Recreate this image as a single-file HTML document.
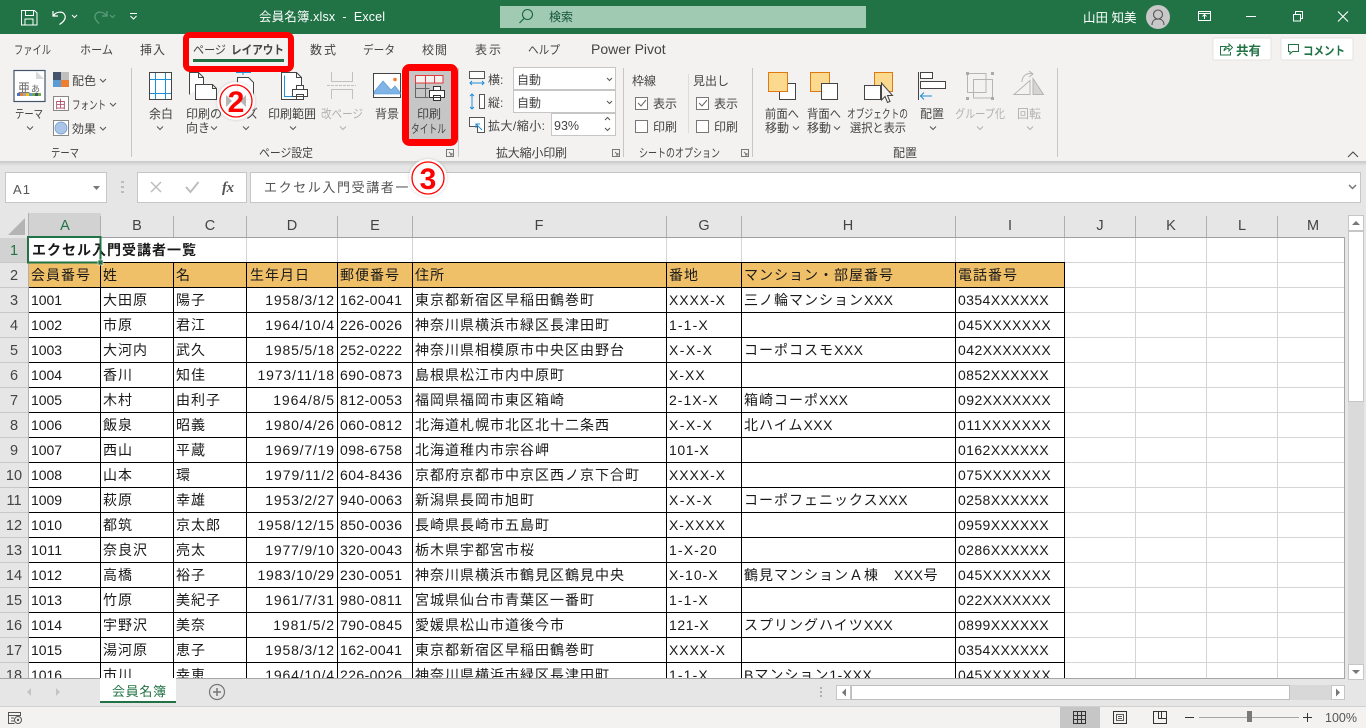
<!DOCTYPE html>
<html lang="ja"><head><meta charset="utf-8"><title>会員名簿.xlsx - Excel</title>
<style>
html,body{margin:0;padding:0;background:#e6e6e6;width:1366px;height:728px;overflow:hidden}
svg{display:block}
text{font-family:"Liberation Sans","Noto Sans CJK JP",sans-serif;white-space:pre}
.r{font-size:12px;fill:#444}
.d{font-size:12px;fill:#b1b1b1}
.t{font-size:12px;fill:#444}
.w{font-size:12px;fill:#fff}
.c{font-size:14px;letter-spacing:1px;fill:#1a1a1a}
.n{font-size:14px;letter-spacing:0;fill:#1a1a1a}
.x{letter-spacing:.5px}
.h{font-size:14.5px;fill:#444;text-anchor:middle}
.e{text-anchor:end}
.ch{fill:none;stroke:#555;stroke-width:1}
.chd{fill:none;stroke:#b1b1b1;stroke-width:1}
.i{fill:none;stroke:#444;stroke-width:1}
.b{fill:none;stroke:#1f8fd6;stroke-width:1}
.g{fill:#d4d4d4}
.k{fill:#000}
</style></head><body>
<svg xmlns="http://www.w3.org/2000/svg" width="1366" height="728" viewBox="0 0 1366 728">
<defs>
<clipPath id="gc"><rect x="0" y="213" width="1345" height="465"/></clipPath>
<linearGradient id="sh" x1="0" y1="0" x2="0" y2="1"><stop offset="0" stop-color="#c8c8c8"/><stop offset="1" stop-color="#e6e6e6"/></linearGradient>
<filter id="bl" x="-30%" y="-30%" width="160%" height="160%"><feGaussianBlur stdDeviation="1.2"/></filter>
</defs>
<rect width="1366" height="728" fill="#e6e6e6"/>

<!-- title bar -->
<rect width="1366" height="34" fill="#217346"/>
<path d="M21.5 10.5h13l2.500 2.500v12h-15.500z M25.500 10.500v5h8v-5 M25 25v-6h8v6" fill="none" stroke="#fff"/>
<path d="M53 11v5h5 M53.500 15.500c3-4 9-4.500 11-1 2 3.500-.5 7-5 10" fill="none" stroke="#fff" stroke-width="1.200"/>
<path d="M72 15l2.500 2.500 2.500-2.500" fill="none" stroke="#fff"/>
<path d="M107 11v5h-5 M106.500 15.500c-3-4-9-4.500-11-1-1.500 2.500 0 6 3.500 9" fill="none" stroke="#5f9e7c" stroke-width="1.200"/>
<path d="M110 15l2.500 2.500 2.500-2.500" fill="none" stroke="#5f9e7c"/>
<path d="M130 13.500h7M130.500 16l3 3 3-3" fill="none" stroke="#fff"/>
<text x="259" y="21" class="w" style="font-size:12.500px" textLength="126">会員名簿.xlsx  -  Excel</text>
<rect x="500" y="6" width="366" height="22" fill="#a0cbb2"/>
<circle cx="527.500" cy="14.500" r="5" fill="none" stroke="#17663c" stroke-width="1.100"/>
<path d="M524 18.500l-4.500 4.500" stroke="#17663c" stroke-width="1.200"/>
<text x="549" y="21" style="font-size:12px;fill:#17543a">検索</text>
<text x="1083" y="22" class="w" style="font-size:12.500px">山田 知美</text>
<circle cx="1158" cy="17" r="12" fill="#c8c8c8"/>
<circle cx="1158" cy="14.500" r="4.500" fill="none" stroke="#555" stroke-width="1.100"/>
<path d="M1152 25c0-4 2.500-6 6-6s6 2 6 6" fill="none" stroke="#555" stroke-width="1.100"/>
<path d="M1198.500 11.500h12v9h-12zM1198.500 13.500h12M1204.500 19v-4M1202.500 16.500l2-2 2 2" fill="none" stroke="#fff"/>
<rect x="1246" y="16" width="10" height="1" fill="#fff"/>
<path d="M1293.500 14.500h7v6.500h-7zM1295.500 14v-2.500h7v7h-2" fill="none" stroke="#fff"/>
<path d="M1338 11.500l10 10M1348 11.500l-10 10" stroke="#fff" stroke-width="1.100"/>

<!-- ribbon -->
<rect y="34" width="1366" height="127" fill="#f3f2f1"/>
<rect y="161" width="1366" height="5" fill="url(#sh)"/>
<text x="14" y="54" class="t" textLength="37" lengthAdjust="spacingAndGlyphs">ファイル</text>
<text x="80" y="54" class="t" textLength="33" lengthAdjust="spacingAndGlyphs">ホーム</text>
<text x="140" y="54" class="t" textLength="25">挿入</text>
<text x="193" y="54" class="t" textLength="33" lengthAdjust="spacingAndGlyphs">ページ</text>
<text x="231" y="54" class="t" style="font-weight:700" textLength="53" lengthAdjust="spacingAndGlyphs">レイアウト</text>
<text x="310" y="54" class="t" textLength="26">数式</text>
<text x="363" y="54" class="t" textLength="32" lengthAdjust="spacingAndGlyphs">データ</text>
<text x="422" y="54" class="t" textLength="25">校閲</text>
<text x="475" y="54" class="t" textLength="26">表示</text>
<text x="528" y="54" class="t" textLength="32" lengthAdjust="spacingAndGlyphs">ヘルプ</text>
<text x="591" y="54" class="t" style="font-size:14px">Power Pivot</text>
<rect x="193" y="59" width="91" height="3" fill="#217346"/>
<rect x="186" y="35" width="105" height="34" rx="4" fill="none" stroke="#f00" stroke-width="6"/>

<rect x="1213" y="38" width="58" height="22" rx="1" fill="#fff" stroke="#e4e2e0"/>
<path d="M1226.500 46.500h-6v8.500h10v-3M1224 51c0-3 2.500-4.500 5-4.500v-2.500l3.500 3.500-3.500 3.500v-2.500c-2 0-4 .5-5 2.500z" fill="none" stroke="#217346"/>
<text x="1236" y="55" style="font-size:12.500px;font-weight:700;fill:#217346">共有</text>
<rect x="1281" y="38" width="72" height="22" rx="1" fill="#fff" stroke="#e4e2e0"/>
<path d="M1288.500 44.500h10v7h-6l-2.500 2.500v-2.500h-1.500z" fill="none" stroke="#217346"/>
<text x="1303" y="55" style="font-size:12px;font-weight:700;fill:#217346" textLength="42" lengthAdjust="spacingAndGlyphs">コメント</text>

<!-- theme -->
<rect x="14" y="70.500" width="31" height="31" fill="#fff" stroke="#44546a" stroke-width="1.200"/>
<path d="M36 71l8 8h-8z" fill="#d9d9d9"/>
<text x="18" y="92" style="font-size:12px;fill:#666">亜</text><text x="31" y="92" style="font-size:9px;fill:#666">あ</text>
<rect x="17" y="93" width="3" height="3" fill="#4472c4"/><rect x="20" y="93" width="3" height="3" fill="#ed7d31"/><rect x="23" y="93" width="3" height="3" fill="#a5a5a5"/><rect x="26" y="93" width="3" height="3" fill="#ffc000"/><rect x="29" y="93" width="3" height="3" fill="#5b9bd5"/><rect x="32" y="93" width="3" height="3" fill="#70ad47"/><rect x="35" y="93" width="3" height="3" fill="#44546a"/><rect x="38" y="93" width="3" height="3" fill="#70ad47"/>
<text x="15" y="118" class="r" textLength="28" lengthAdjust="spacingAndGlyphs">テーマ</text>
<path class="ch" d="M27 126.500l3 3 3-3"/>
<rect x="53" y="72" width="8" height="8" fill="#44546a"/><rect x="61" y="72" width="8" height="8" fill="#bfbfbf"/><rect x="53" y="80" width="8" height="7" fill="#5b9bd5"/><rect x="61" y="80" width="8" height="7" fill="#ed7d31"/>
<text x="72" y="85" class="r">配色</text><path class="ch" d="M100 79l3 3 3-3"/>
<rect x="53.500" y="96.500" width="15" height="14" fill="#fff" stroke="#888"/>
<text x="55" y="108" style="font-size:11px;fill:#a46">由</text>
<text x="72" y="109" class="r" textLength="34" lengthAdjust="spacingAndGlyphs">フォント</text><path class="ch" d="M110 103l3 3 3-3"/>
<rect x="53.500" y="120.500" width="15" height="15" fill="#fff" stroke="#888"/>
<circle cx="61" cy="128" r="6" fill="#a9c6e8" stroke="#6a95c5" stroke-width=".7"/>
<text x="72" y="133" class="r">効果</text><path class="ch" d="M100 127l3 3 3-3"/>
<text x="51" y="157" class="r" textLength="28" lengthAdjust="spacingAndGlyphs">テーマ</text>
<rect x="131" y="68" width="1" height="89" fill="#c6c6c6"/>

<!-- page setup -->
<rect x="149.500" y="72.500" width="22" height="27" fill="#fff" stroke="#444"/>
<path class="b" d="M155.500 73v26M165.500 73v26M150 79.500h21M150 93.500h21"/>
<text x="149" y="118" class="r">余白</text><path class="ch" d="M157 126.500l3 3 3-3"/>
<path class="i" d="M189.500 94.500v-22h9l5 5v7" style="fill:#fff"/>
<path class="i" d="M198.500 72.500v5h5"/>
<path d="M195.500 84.500h17l4 4v11h-21z" fill="#fff" stroke="#444"/>
<path class="i" d="M212.500 84.500v4h4"/>
<text x="186" y="118" class="r">印刷の</text>
<text x="186" y="132" class="r">向き</text><path class="ch" d="M211 126.500l3 3 3-3"/>
<path d="M236 72.500h15M243 72v3" fill="none" stroke="#1f8fd6"/>
<path d="M237.500 77.500h11l5 5v17h-16z" fill="#fff" stroke="#444"/>
<text x="246" y="118" class="r">ズ</text><path class="ch" d="M243 126.500l3 3 3-3"/>
<path d="M281.500 72.500h15l5 5v22h-20z" fill="#fff" stroke="#444"/><path class="i" d="M296.500 72.500v5h5"/>
<path class="b" d="M284.500 75.500v21h8"/>
<path d="M296.500 85.500h7v4h-7zM292.500 89.500h15v7h-15zM296.500 94.500h7v5h-7z" fill="#fff" stroke="#444"/>
<text x="268" y="118" class="r">印刷範囲</text><path class="ch" d="M290 126.500l3 3 3-3"/>
<path d="M331.500 72v9.500h21V72M331.500 99v-9.500h21V99" fill="none" stroke="#c0c0c0"/><path d="M327 85.500h29" stroke="#c0c0c0" stroke-dasharray="3 1"/>
<text x="321" y="118" class="d" textLength="42" lengthAdjust="spacingAndGlyphs">改ページ</text><path class="chd" d="M340 126.500l3 3 3-3"/>
<rect x="373.500" y="73.500" width="27" height="24" fill="#fff" stroke="#444"/>
<path d="M374 92l9-11 8 9 4-4 5.500 7v1h-26.500z" fill="#7fb5e6" stroke="#4f90cf" stroke-width=".6"/>
<circle cx="395" cy="79.500" r="1.800" fill="#ed7d31"/>
<text x="375" y="118" class="r">背景</text>

<rect x="405.500" y="67.500" width="49" height="75" rx="4" fill="#c6c6c6" stroke="#f00" stroke-width="7"/>
<path d="M415.500 75.500h27.500v7.500h-27.500zM425.500 75.500v7.500M434.500 75.500v7.500" fill="#f3f2f1" stroke="#e8383b"/>
<path d="M415.500 83v14.500h13M415.500 88.500h14M425.500 83v14.500" fill="none" stroke="#666"/>
<path d="M433.500 86.500h7v4h-7zM429.500 90.500h15v7h-15zM433.500 95.500h7v5h-7z" fill="#fff" stroke="#333"/>
<text x="417" y="118" class="r">印刷</text>
<text x="411" y="133" class="r" textLength="35" lengthAdjust="spacingAndGlyphs">タイトル</text>
<text x="259" y="157" class="r" textLength="54" lengthAdjust="spacingAndGlyphs">ページ設定</text>
<path d="M446.500 149.500h7v7h-7zM449 152l3 3M452 153v2h-2" fill="none" stroke="#777"/>
<rect x="458" y="68" width="1" height="89" fill="#c6c6c6"/>

<!-- scale -->
<path d="M469.500 71.500h15v7h-15z" fill="#fff" stroke="#555"/><path d="M470 83h14M472 81l-2 2 2 2M482 81l2 2-2 2" fill="none" stroke="#1f8fd6"/>
<text x="488" y="84" class="r">横:</text>
<rect x="513.500" y="67.500" width="102" height="22" fill="#fff" stroke="#c6c6c6"/><text x="517" y="84" class="r">自動</text><path class="ch" d="M607 78l2.500 2.500 2.500-2.500"/>
<path d="M479.500 94.500h5v14h-5z" fill="#fff" stroke="#555"/><path d="M472 94v15M470 96l2-2 2 2M470 107l2 2 2-2" fill="none" stroke="#1f8fd6"/>
<text x="488" y="107" class="r">縦:</text>
<rect x="513.500" y="90.500" width="102" height="22" fill="#fff" stroke="#c6c6c6"/><text x="517" y="107" class="r">自動</text><path class="ch" d="M607 101l2.500 2.500 2.500-2.500"/>
<path d="M469.500 117.500h15v15h-7v-6h-8z" fill="#fff" stroke="#555"/><path d="M482 130l-6-6M476 128v-4h4" fill="none" stroke="#1f8fd6"/>
<text x="488" y="130" class="r" textLength="57">拡大/縮小:</text>
<rect x="551.500" y="113.500" width="64" height="22" fill="#fff" stroke="#c6c6c6"/><text x="554" y="130" class="r" style="font-size:12.500px">93%</text>
<path class="ch" d="M605 120l2.500-2.500 2.500 2.500M605 128l2.500 2.500 2.500-2.500"/>
<text x="496" y="157" class="r" textLength="71">拡大縮小印刷</text>
<path d="M612.500 149.500h7v7h-7zM615 152l3 3M618 153v2h-2" fill="none" stroke="#777"/>
<rect x="623" y="68" width="1" height="89" fill="#c6c6c6"/>

<!-- sheet options -->
<text x="632" y="85" class="r">枠線</text>
<text x="693" y="85" class="r">見出し</text>
<rect x="688" y="74" width="1" height="59" fill="#dcdcdc"/>
<rect x="635.500" y="97.500" width="12" height="12" fill="#fff" stroke="#777"/><path d="M638 103l3 3 5-6" fill="none" stroke="#666"/>
<text x="653" y="108" class="r">表示</text>
<rect x="635.500" y="120.500" width="12" height="12" fill="#fff" stroke="#777"/><text x="653" y="131" class="r">印刷</text>
<rect x="696.500" y="97.500" width="12" height="12" fill="#fff" stroke="#777"/><path d="M699 103l3 3 5-6" fill="none" stroke="#666"/>
<text x="714" y="108" class="r">表示</text>
<rect x="696.500" y="120.500" width="12" height="12" fill="#fff" stroke="#777"/><text x="714" y="131" class="r">印刷</text>
<text x="639" y="157" class="r" textLength="81" lengthAdjust="spacingAndGlyphs">シートのオプション</text>
<path d="M741.500 149.500h7v7h-7zM744 152l3 3M747 153v2h-2" fill="none" stroke="#777"/>
<rect x="752" y="68" width="1" height="89" fill="#c6c6c6"/>

<!-- arrange -->
<rect x="779.500" y="83.500" width="16" height="16" fill="#fff" stroke="#444"/>
<rect x="768.500" y="72.500" width="19" height="19" fill="#fbd98f" stroke="#df7a11"/>
<text x="765" y="118" class="r" textLength="34" lengthAdjust="spacingAndGlyphs">前面へ</text><text x="765" y="132" class="r">移動</text><path class="ch" d="M793 126.500l3 3 3-3"/>
<rect x="810.500" y="72.500" width="19" height="19" fill="#fbd98f" stroke="#df7a11"/>
<rect x="821.500" y="83.500" width="16" height="16" fill="#fff" stroke="#444"/>
<text x="807" y="118" class="r" textLength="34" lengthAdjust="spacingAndGlyphs">背面へ</text><text x="807" y="132" class="r">移動</text><path class="ch" d="M834 126.500l3 3 3-3"/>
<rect x="874.500" y="72.500" width="18" height="19" fill="#fbd98f" stroke="#df7a11"/>
<rect x="864.500" y="85.500" width="16" height="14" fill="#fff" stroke="#444"/>
<path d="M881.500 83v17l3.500-3.500 2.500 6 2.500-1-2.500-6h5z" fill="#f3f2f1" stroke="#444"/>
<text x="847" y="118" class="r" textLength="61" lengthAdjust="spacingAndGlyphs">オブジェクトの</text><text x="850" y="132" class="r" textLength="56" lengthAdjust="spacingAndGlyphs">選択と表示</text>
<path class="i" d="M918.500 72v28"/><rect x="920.500" y="72.500" width="12" height="6" fill="#fff" stroke="#444"/><rect x="920.500" y="81.500" width="25" height="7" fill="#fff" stroke="#444"/>
<path class="b" d="M920 96h12M924 92.500l-3.500 3.500 3.500 3.500"/>
<text x="920" y="118" class="r">配置</text><path class="ch" d="M930 126.500l3 3 3-3"/>
<path d="M967.500 73.500h18.500v19h-18.500zM973.500 79.500h19v18.500h-19z" fill="none" stroke="#b5b5b5"/><rect x="966" y="72" width="3" height="3" fill="#aaa"/><rect x="991" y="72" width="3" height="3" fill="#aaa"/><rect x="966" y="97" width="3" height="3" fill="#aaa"/><rect x="991" y="97" width="3" height="3" fill="#aaa"/>
<text x="955" y="118" class="d" textLength="50" lengthAdjust="spacingAndGlyphs">グループ化</text><path class="chd" d="M977 126.500l3 3 3-3"/>
<path d="M1014 94.500h16v-14z" fill="none" stroke="#b5b5b5"/><path d="M1033 94.500v-16l10.500 16z" fill="#d4d4d4" stroke="#b5b5b5"/><path d="M1022 82c0-6 5-10 11-8M1029 71l4 3-4 3" fill="none" stroke="#b5b5b5"/>
<text x="1017" y="118" class="d">回転</text><path class="chd" d="M1027 126.500l3 3 3-3"/>
<text x="893" y="157" class="r">配置</text>
<rect x="1057" y="68" width="1" height="89" fill="#c6c6c6"/>
<path d="M1348 157l5-5 5 5" fill="none" stroke="#444"/>

<!-- formula bar -->
<rect x="5.500" y="172.500" width="101" height="30" fill="#fff" stroke="#c6c6c6"/>
<text x="13" y="194" style="font-size:13px;fill:#555" textLength="17">A1</text>
<path d="M93 186h7l-3.500 4z" fill="#777"/>
<path d="M121 181h3v2h-3zM121 186h3v2h-3zM121 191h3v2h-3z" fill="#bcbcbc"/>
<rect x="137.500" y="172.500" width="109" height="30" fill="#fff" stroke="#c6c6c6"/>
<path d="M151 182l10 10M161 182l-10 10" stroke="#bdbdbd" stroke-width="1.500"/>
<path d="M186 187l4.500 5 8-10" fill="none" stroke="#bdbdbd" stroke-width="2"/>
<text x="222" y="192" style="font-family:'Liberation Serif',serif;font-style:italic;font-weight:700;font-size:15px;letter-spacing:-.5px;fill:#555">fx</text>
<rect x="250.500" y="172.500" width="1110" height="30" fill="#fff" stroke="#c6c6c6"/>
<text x="264" y="192" style="font-size:13px;letter-spacing:1.600px;fill:#555">エクセル入門受講者一</text>
<path d="M1349 185l3.500 3.500 3.500-3.500" fill="none" stroke="#777" stroke-width="1.500"/>

<!-- grid -->
<g clip-path="url(#gc)">
<rect x="28" y="238" width="1316" height="440" fill="#fff"/>
<rect x="28" y="213" width="73" height="24" fill="#d2d2d2"/>
<rect x="0" y="238" width="28" height="24" fill="#d2d2d2"/>
<path d="M8 235h17v-17z" fill="#b4b4b4"/>
<rect x="28" y="262" width="1036" height="25" fill="#f0c069"/>
<path class="g" d="M1135 238h1v440h-1zM1206 238h1v440h-1zM1277 238h1v440h-1z"/>
<path d="M246.500 238v24M337.500 238v24M412.500 238v24M666.500 238v24M741.500 238v24M955.500 238v24M1064.500 238v24" stroke="#d4d4d4"/>
<path d="M1065 262.500h279M1065 287.500h279M1065 312.500h279M1065 337.500h279M1065 362.500h279M1065 387.500h279M1065 412.500h279M1065 437.500h279M1065 462.500h279M1065 487.500h279M1065 512.500h279M1065 537.500h279M1065 562.500h279M1065 587.500h279M1065 612.500h279M1065 637.500h279M1065 662.500h279" stroke="#d4d4d4"/>
<path d="M28 262.500h1037M28 287.500h1037M28 312.500h1037M28 337.500h1037M28 362.500h1037M28 387.500h1037M28 412.500h1037M28 437.500h1037M28 462.500h1037M28 487.500h1037M28 512.500h1037M28 537.500h1037M28 562.500h1037M28 587.500h1037M28 612.500h1037M28 637.500h1037M28 662.500h1037" stroke="#000"/>
<path d="M100.500 262v416M173.500 262v416M246.500 262v416M337.500 262v416M412.500 262v416M666.500 262v416M741.500 262v416M955.500 262v416M1064.500 262v416" stroke="#000"/>
<path d="M28.500 213v465M100.500 216v21M173.500 216v21M246.500 216v21M337.500 216v21M412.500 216v21M666.500 216v21M741.500 216v21M955.500 216v21M1064.500 216v21M1135.500 216v21M1206.500 216v21M1277.500 216v21" stroke="#b0b0b0"/>
<path d="M28 237.500h1316" stroke="#a0a0a0"/>
<path d="M0 262.500h28M0 287.500h28M0 312.500h28M0 337.500h28M0 362.500h28M0 387.500h28M0 412.500h28M0 437.500h28M0 462.500h28M0 487.500h28M0 512.500h28M0 537.500h28M0 562.500h28M0 587.500h28M0 612.500h28M0 637.500h28M0 662.500h28" stroke="#c8c8c8"/>
<text x="65" y="230" class="h" style="fill:#217346">A</text><text x="137" y="230" class="h">B</text><text x="210" y="230" class="h">C</text><text x="292" y="230" class="h">D</text><text x="375" y="230" class="h">E</text><text x="539" y="230" class="h">F</text><text x="704" y="230" class="h">G</text><text x="848" y="230" class="h">H</text><text x="1010" y="230" class="h">I</text><text x="1100" y="230" class="h">J</text><text x="1171" y="230" class="h">K</text><text x="1242" y="230" class="h">L</text><text x="1313" y="230" class="h">M</text>
<text x="14" y="255" class="h" style="fill:#217346">1</text><text x="14" y="280" class="h">2</text><text x="14" y="305" class="h">3</text><text x="14" y="330" class="h">4</text><text x="14" y="355" class="h">5</text><text x="14" y="380" class="h">6</text><text x="14" y="405" class="h">7</text><text x="14" y="430" class="h">8</text><text x="14" y="455" class="h">9</text><text x="14" y="480" class="h">10</text><text x="14" y="505" class="h">11</text><text x="14" y="530" class="h">12</text><text x="14" y="555" class="h">13</text><text x="14" y="580" class="h">14</text><text x="14" y="605" class="h">15</text><text x="14" y="630" class="h">16</text><text x="14" y="655" class="h">17</text><text x="14" y="680" class="h">18</text>

<text x="32" y="255" class="c" style="font-weight:700">エクセル入門受講者一覧</text>
<g transform="translate(0,280)"><text x="31" class="c">会員番号</text><text x="103" class="c">姓</text><text x="176" class="c">名</text><text x="250" class="c">生年月日</text><text x="340" class="c">郵便番号</text><text x="415" class="c">住所</text><text x="669" class="c">番地</text><text x="744" class="c">マンション・部屋番号</text><text x="958" class="c">電話番号</text></g>

<g transform="translate(0,305)"><text x="31" class="n" textLength="31">1001</text><text x="103" class="c">大田原</text><text x="176" class="c">陽子</text><text x="334" class="n e" textLength="68.700">1958/3/12</text><text x="340" class="n" textLength="62">162-0041</text><text x="415" class="c">東京都新宿区早稲田鶴巻町</text><text x="669" class="n" textLength="56">XXXX-X</text><text x="744" class="c">三ノ輪マンション<tspan class="x">XXX</tspan></text><text x="958" class="n" textLength="90.700">0354XXXXXX</text></g>
<g transform="translate(0,330)"><text x="31" class="n" textLength="31">1002</text><text x="103" class="c">市原</text><text x="176" class="c">君江</text><text x="334" class="n e" textLength="68.700">1964/10/4</text><text x="340" class="n" textLength="62">226-0026</text><text x="415" class="c">神奈川県横浜市緑区長津田町</text><text x="669" class="n" textLength="38.700">1-1-X</text><text x="958" class="n" textLength="92.700">045XXXXXXX</text></g>
<g transform="translate(0,355)"><text x="31" class="n" textLength="31">1003</text><text x="103" class="c">大河内</text><text x="176" class="c">武久</text><text x="334" class="n e" textLength="68.700">1985/5/18</text><text x="340" class="n" textLength="62">252-0222</text><text x="415" class="c">神奈川県相模原市中央区由野台</text><text x="669" class="n" textLength="43">X-X-X</text><text x="744" class="c">コーポコスモ<tspan class="x">XXX</tspan></text><text x="958" class="n" textLength="92.700">042XXXXXXX</text></g>
<g transform="translate(0,380)"><text x="31" class="n" textLength="31">1004</text><text x="103" class="c">香川</text><text x="176" class="c">知佳</text><text x="334" class="n e" textLength="76.500">1973/11/18</text><text x="340" class="n" textLength="62">690-0873</text><text x="415" class="c">島根県松江市内中原町</text><text x="669" class="n" textLength="35.700">X-XX</text><text x="958" class="n" textLength="90.700">0852XXXXXX</text></g>
<g transform="translate(0,405)"><text x="31" class="n" textLength="31">1005</text><text x="103" class="c">木村</text><text x="176" class="c">由利子</text><text x="334" class="n e" textLength="60.800">1964/8/5</text><text x="340" class="n" textLength="62">812-0053</text><text x="415" class="c">福岡県福岡市東区箱崎</text><text x="669" class="n" textLength="48.700">2-1X-X</text><text x="744" class="c">箱崎コーポ<tspan class="x">XXX</tspan></text><text x="958" class="n" textLength="92.700">092XXXXXXX</text></g>
<g transform="translate(0,430)"><text x="31" class="n" textLength="31">1006</text><text x="103" class="c">飯泉</text><text x="176" class="c">昭義</text><text x="334" class="n e" textLength="68.700">1980/4/26</text><text x="340" class="n" textLength="62">060-0812</text><text x="415" class="c">北海道札幌市北区北十二条西</text><text x="669" class="n" textLength="43">X-X-X</text><text x="744" class="c">北ハイム<tspan class="x">XXX</tspan></text><text x="958" class="n" textLength="92.700">011XXXXXXX</text></g>
<g transform="translate(0,455)"><text x="31" class="n" textLength="31">1007</text><text x="103" class="c">西山</text><text x="176" class="c">平蔵</text><text x="334" class="n e" textLength="68.700">1969/7/19</text><text x="340" class="n" textLength="62">098-6758</text><text x="415" class="c">北海道稚内市宗谷岬</text><text x="669" class="n" textLength="39.700">101-X</text><text x="958" class="n" textLength="90.700">0162XXXXXX</text></g>
<g transform="translate(0,480)"><text x="31" class="n" textLength="31">1008</text><text x="103" class="c">山本</text><text x="176" class="c">環</text><text x="334" class="n e" textLength="68.700">1979/11/2</text><text x="340" class="n" textLength="62">604-8436</text><text x="415" class="c">京都府京都市中京区西ノ京下合町</text><text x="669" class="n" textLength="56">XXXX-X</text><text x="958" class="n" textLength="92.700">075XXXXXXX</text></g>
<g transform="translate(0,505)"><text x="31" class="n" textLength="31">1009</text><text x="103" class="c">萩原</text><text x="176" class="c">幸雄</text><text x="334" class="n e" textLength="68.700">1953/2/27</text><text x="340" class="n" textLength="62">940-0063</text><text x="415" class="c">新潟県長岡市旭町</text><text x="669" class="n" textLength="43">X-X-X</text><text x="744" class="c">コーポフェニックス<tspan class="x">XXX</tspan></text><text x="958" class="n" textLength="90.700">0258XXXXXX</text></g>
<g transform="translate(0,530)"><text x="31" class="n" textLength="31">1010</text><text x="103" class="c">都筑</text><text x="176" class="c">京太郎</text><text x="334" class="n e" textLength="76.500">1958/12/15</text><text x="340" class="n" textLength="62">850-0036</text><text x="415" class="c">長崎県長崎市五島町</text><text x="669" class="n" textLength="56">X-XXXX</text><text x="958" class="n" textLength="90.700">0959XXXXXX</text></g>
<g transform="translate(0,555)"><text x="31" class="n" textLength="31">1011</text><text x="103" class="c">奈良沢</text><text x="176" class="c">亮太</text><text x="334" class="n e" textLength="68.700">1977/9/10</text><text x="340" class="n" textLength="62">320-0043</text><text x="415" class="c">栃木県宇都宮市桜</text><text x="669" class="n" textLength="47.700">1-X-20</text><text x="958" class="n" textLength="90.700">0286XXXXXX</text></g>
<g transform="translate(0,580)"><text x="31" class="n" textLength="31">1012</text><text x="103" class="c">高橋</text><text x="176" class="c">裕子</text><text x="334" class="n e" textLength="76.500">1983/10/29</text><text x="340" class="n" textLength="62">230-0051</text><text x="415" class="c">神奈川県横浜市鶴見区鶴見中央</text><text x="669" class="n" textLength="48.700">X-10-X</text><text x="744" class="c">鶴見マンションＡ棟　<tspan class="x">XXX</tspan>号</text><text x="958" class="n" textLength="92.700">045XXXXXXX</text></g>
<g transform="translate(0,605)"><text x="31" class="n" textLength="31">1013</text><text x="103" class="c">竹原</text><text x="176" class="c">美紀子</text><text x="334" class="n e" textLength="68.700">1961/7/31</text><text x="340" class="n" textLength="62">980-0811</text><text x="415" class="c">宮城県仙台市青葉区一番町</text><text x="669" class="n" textLength="38.700">1-1-X</text><text x="958" class="n" textLength="92.700">022XXXXXXX</text></g>
<g transform="translate(0,630)"><text x="31" class="n" textLength="31">1014</text><text x="103" class="c">宇野沢</text><text x="176" class="c">美奈</text><text x="334" class="n e" textLength="60.800">1981/5/2</text><text x="340" class="n" textLength="62">790-0845</text><text x="415" class="c">愛媛県松山市道後今市</text><text x="669" class="n" textLength="39.700">121-X</text><text x="744" class="c">スプリングハイツ<tspan class="x">XXX</tspan></text><text x="958" class="n" textLength="90.700">0899XXXXXX</text></g>
<g transform="translate(0,655)"><text x="31" class="n" textLength="31">1015</text><text x="103" class="c">湯河原</text><text x="176" class="c">恵子</text><text x="334" class="n e" textLength="68.700">1958/3/12</text><text x="340" class="n" textLength="62">162-0041</text><text x="415" class="c">東京都新宿区早稲田鶴巻町</text><text x="669" class="n" textLength="56">XXXX-X</text><text x="958" class="n" textLength="90.700">0354XXXXXX</text></g>
<g transform="translate(0,680)"><text x="31" class="n" textLength="31">1016</text><text x="103" class="c">市川</text><text x="176" class="c">幸恵</text><text x="334" class="n e" textLength="68.700">1964/10/4</text><text x="340" class="n" textLength="62">226-0026</text><text x="415" class="c">神奈川県横浜市緑区長津田町</text><text x="669" class="n" textLength="38.700">1-1-X</text><text x="744" class="c">Bマンション<tspan class="x">1-XXX</tspan></text><text x="958" class="n" textLength="92.700">045XXXXXXX</text></g>

<rect x="28" y="237" width="72.500" height="25.500" fill="none" stroke="#217346" stroke-width="2"/>
<rect x="98" y="260" width="5" height="5" fill="#217346" stroke="#fff" stroke-width=".6"/>
</g>
<rect x="1344" y="237" width="1" height="441" fill="#a6a6a6"/>

<!-- vertical scrollbar -->
<rect x="1345" y="213" width="21" height="465" fill="#e6e6e6"/>
<rect x="1348.500" y="215.500" width="15" height="15" fill="#fff" stroke="#c6c6c6"/>
<path d="M1352 225l4-4 4 4z" fill="#777"/>
<rect x="1348.500" y="231.500" width="15" height="170" fill="#fff" stroke="#c6c6c6"/>
<rect x="1348" y="402" width="16" height="262" fill="#dadada"/>
<rect x="1348.500" y="664.500" width="15" height="15" fill="#fff" stroke="#c6c6c6"/>
<path d="M1352 670l4 4 4-4z" fill="#777"/>

<!-- sheet strip -->
<rect y="678" width="1345" height="29" fill="#e6e6e6"/>
<rect y="678" width="1345" height="1" fill="#a6a6a6"/>
<path d="M31 688v8l-4-4zM56 688v8l4-4z" fill="#c4c4c4"/>
<rect x="100" y="678" width="76" height="25" fill="#fff"/>
<rect x="100" y="701" width="76" height="2" fill="#217346"/>
<text x="112" y="696" style="font-size:13px;fill:#217346" textLength="54">会員名簿</text>
<circle cx="217" cy="692" r="7.500" fill="none" stroke="#777" stroke-width="1.200"/>
<path d="M213 692h8M217 688v8" stroke="#777" stroke-width="1.500"/>
<path d="M820 687h2v2h-2zM820 691h2v2h-2zM820 695h2v2h-2z" fill="#b0b0b0"/>
<rect x="836.500" y="685.500" width="14" height="14" fill="#fff" stroke="#c6c6c6"/><path d="M846 688.500v8l-4-4z" fill="#777"/>
<rect x="851.500" y="685.500" width="438" height="14" fill="#fff" stroke="#bdbdbd"/>
<rect x="1290" y="685" width="41" height="15" fill="#d8d8d8"/>
<rect x="1331.500" y="685.500" width="13" height="14" fill="#fff" stroke="#c6c6c6"/><path d="M1336 688.500v8l4-4z" fill="#777"/>

<!-- status bar -->
<rect y="706" width="1366" height="1" fill="#d0d0d0"/>
<rect y="707" width="1366" height="21" fill="#f3f2f1"/>
<path d="M8.500 712.500h12v3h-12zM8.500 715.500v8h6M11 718h3M11 721h3" fill="none" stroke="#555"/><circle cx="18" cy="720" r="3.500" fill="none" stroke="#555"/><circle cx="18" cy="720" r="1.200" fill="#555"/>
<rect x="1060" y="707" width="40" height="21" fill="#c6c6c6"/>
<path d="M1073.500 711.500h12v12h-12zM1073.500 715.500h12M1073.500 719.500h12M1077.500 711.500v12M1081.500 711.500v12" fill="none" stroke="#333"/>
<path d="M1113.500 711.500h13v12h-13z" fill="none" stroke="#333"/><path d="M1116.500 714.500h7v6h-7zM1118 716.500h4M1118 718.500h4" fill="none" stroke="#333" stroke-width=".8"/>
<path d="M1153.500 711.500h13v12h-13zM1158.500 711.500v7h8M1161.500 711.500v7" fill="none" stroke="#333"/>
<rect x="1185" y="717" width="9" height="1" fill="#333"/>
<rect x="1199" y="717" width="100" height="1" fill="#a6a6a6"/>
<rect x="1247" y="711" width="5" height="11" fill="#7a7a7a"/>
<path d="M1303 717.500h9M1307.500 713v9" stroke="#333"/>
<text x="1325" y="722" style="font-size:12.500px;fill:#555">100%</text>

<!-- callouts -->
<circle cx="236" cy="101" r="19.500" fill="#000" opacity=".12" filter="url(#bl)"/>
<circle cx="236" cy="101" r="19" fill="#fff" opacity=".92"/>
<path d="M226 95l6 6-6 6zM246 95l-6 6 6 6z" fill="#b5b5b5"/>
<circle cx="236" cy="101" r="16" fill="none" stroke="#f00" stroke-width="1.300"/>
<text x="236" y="112" text-anchor="middle" style="font-size:30px;font-weight:700;fill:#f00">2</text>
<circle cx="428" cy="178" r="19.500" fill="#000" opacity=".12" filter="url(#bl)"/>
<circle cx="428" cy="178" r="19" fill="#fff" opacity=".92"/>
<circle cx="428" cy="178" r="16" fill="none" stroke="#f00" stroke-width="1.300"/>
<text x="428" y="189" text-anchor="middle" style="font-size:30px;font-weight:700;fill:#f00">3</text>
</svg>
</body></html>
